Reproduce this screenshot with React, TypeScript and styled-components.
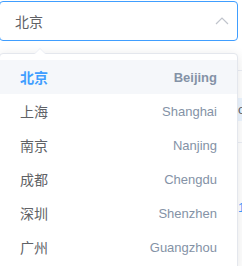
import React from "react"
import styled, { createGlobalStyle } from "styled-components"

const GlobalStyle = createGlobalStyle`
html, body {
    margin: 0;
    padding: 0;
    background: #fff;
    overflow: hidden;
}
body {
    font-family: "Liberation Sans", "Noto Sans CJK SC", sans-serif;
    -webkit-font-smoothing: antialiased;
}
`

type city = {
    label: string
    value: string
}

const cities: city[] = [
    { label: "北京", value: "Beijing" },
    { label: "上海", value: "Shanghai" },
    { label: "南京", value: "Nanjing" },
    { label: "成都", value: "Chengdu" },
    { label: "深圳", value: "Shenzhen" },
    { label: "广州", value: "Guangzhou" },
]

// the page rows peeking out on the right of the dropdown
const rows = [
    { h: 23, line: true },
    { h: 27, line: false },
    { h: 23, line: false, active: true, text: "o" },
    { h: 21, line: true },
    { h: 54, line: false },
    { h: 20, line: false, link: "1" },
]

const Page = styled.div`
width: 320px;
height: 266px;
padding-top: 1px;
box-sizing: border-box;
`

const Select = styled.div`
position: relative;
width: 239px;
margin-left: -1px;
`

const Input = styled.div`
display: flex;
align-items: center;
justify-content: space-between;
height: 40px;
box-sizing: border-box;
padding: 0 8px 0 15px;
border: 1px solid #409eff;
border-radius: 4px;
background: #fff;
color: #606266;
font-size: 14px;
`

const Arrow = styled.svg`
width: 14px;
height: 14px;
`

const Dropdown = styled.div`
position: absolute;
top: 52px;
left: 0;
width: 239px;
box-sizing: border-box;
padding: 6px 0;
background: #fff;
border: 1px solid #e4e7ed;
border-radius: 4px;
box-shadow: 0 2px 12px 0 rgba(0, 0, 0, .1);
z-index: 10;
&::before, &::after {
    content: "";
    position: absolute;
    left: 34px;
    border: 6px solid transparent;
    border-top-width: 0;
}
&::before {
    top: -6px;
    border-bottom-color: #ebeef5;
}
&::after {
    top: -5px;
    border-bottom-color: #fff;
}
`

const Option = styled.div<{ $selected?: boolean }>`
display: flex;
align-items: center;
justify-content: space-between;
height: 34px;
padding: 0 20px;
background: ${p => p.$selected ? "#f5f7fa" : "#fff"};
.name{
    font-size: 14px;
    color: ${p => p.$selected ? "#409eff" : "#606266"};
    font-weight: ${p => p.$selected ? 700 : 400};
}
.value{
    font-size: 13px;
    color: #8492a6;
    font-weight: ${p => p.$selected ? 700 : 400};
}
`

const Table = styled.div`
display: flex;
flex-direction: column;
margin-top: 6px;
width: 320px;
`

const Row = styled.div<{ $h: number, $line?: boolean, $active?: boolean }>`
display: flex;
align-items: center;
height: ${p => p.$h}px;
padding-left: 238px;
border-bottom: ${p => p.$line ? "1px solid #ebeef5" : "none"};
background: ${p => p.$active ? "#ecf5ff" : "transparent"};
font-size: 13px;
color: #606266;
.link{
    color: #409eff;
}
`

export default function App() {
    return (
        <Page>
            <GlobalStyle />
            <Select>
                <Input>
                    <span>北京</span>
                    <Arrow viewBox="0 0 14 14" fill="none">
                        <path d="M1 10 L7 4 L13 10" stroke="#c0c4cc" strokeWidth="1.2" />
                    </Arrow>
                </Input>
                <Dropdown>
                    {cities.map((item, index) => (
                        <Option key={item.value} $selected={index === 0}>
                            <span className="name">{item.label}</span>
                            <span className="value">{item.value}</span>
                        </Option>
                    ))}
                </Dropdown>
            </Select>
            <Table>
                {rows.map((r, index) => (
                    <Row key={index} $h={r.h} $line={r.line} $active={r.active}>
                        {r.text && <span>{r.text}</span>}
                        {r.link && <span className="link">{r.link}</span>}
                    </Row>
                ))}
            </Table>
        </Page>
    )
}
